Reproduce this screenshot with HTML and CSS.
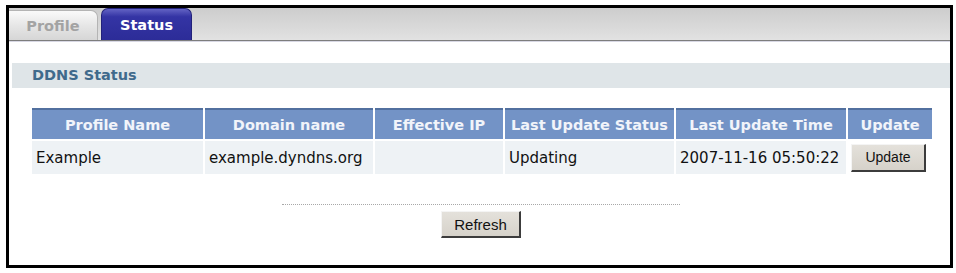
FILE: index.html
```
<!DOCTYPE html>
<html>
<head>
	<meta charset="UTF-8">
	<title>DDNS Status</title>
	<link rel="stylesheet" href="styles.css">
</head>
<body>
	<div class="frame">
		<div class="tab-bar">
			<div class="tab tab-off">Profile</div>
			<div class="tab tab-on">Status</div>
		</div>

		<div class="section-title">DDNS Status</div>

		<table class="status-table">
			<colgroup>
				<col class="c-name">
				<col class="c-domain">
				<col class="c-ip">
				<col class="c-status">
				<col class="c-time">
				<col class="c-update">
			</colgroup>
			<tr>
				<th>Profile Name</th>
				<th>Domain name</th>
				<th>Effective IP</th>
				<th>Last Update Status</th>
				<th>Last Update Time</th>
				<th>Update</th>
			</tr>
			<tr>
				<td>Example</td>
				<td>example.dyndns.org</td>
				<td></td>
				<td>Updating</td>
				<td>2007-11-16 05:50:22</td>
				<td class="btn-cell"><button class="btn btn-update">Update</button></td>
			</tr>
		</table>

		<div class="footer">
			<button class="btn btn-refresh">Refresh</button>
		</div>
	</div>
</body>
</html>
```

FILE: styles.css
```
body {
	margin: 0;
	padding: 0;
	background: #fff;
	font-family: "DejaVu Sans", Verdana, sans-serif;
}

.frame {
	margin: 5px 0 0 6px;
	width: 941px;
	height: 257px;
	border: 3px solid #000;
	background: #fff;
}

/* tabs */
.tab-bar {
	display: flex;
	align-items: flex-end;
	gap: 3px;
	height: 32px;
	background: linear-gradient(#cdcdcd, #d9d9d9 60%, #e2e2e2);
	border-bottom: 1px solid #7d7d7d;
	box-shadow: 0 1px 0 #d8d8e4;
}
.tab {
	display: flex;
	align-items: center;
	justify-content: center;
	font-size: 14.5px;
	font-weight: bold;
	box-sizing: border-box;
}
.tab-off {
	width: 89px;
	height: 30px;
	color: #a3a3a3;
	background: linear-gradient(#fafafa, #e6e6e6 50%, #d6d6d6);
	border: 1px solid #b4b4b4;
	border-bottom: none;
	border-left: none;
	border-radius: 0 7px 0 0;
	padding-top: 1px;
}
.tab-on {
	width: 91px;
	height: 32px;
	color: #fff;
	background: linear-gradient(#6363c4, #3434a4 25%, #2c2c98);
	border: 1px solid #22227a;
	border-bottom: none;
	border-radius: 7px 7px 0 0;
}

/* section */
.section-title {
	margin: 22px 0 0 3px;
	height: 25px;
	line-height: 25px;
	padding-left: 20px;
	background: #dfe5e8;
	color: #3f6a8c;
	font-size: 14.5px;
	font-weight: bold;
}

.status-table {
	margin: 18px 0 0 21px;
	border-spacing: 2px;
	table-layout: fixed;
	width: 904px;
}
.c-name { width: 171px; }
.c-domain { width: 168px; }
.c-ip { width: 128px; }
.c-status { width: 169px; }
.c-time { width: 170px; }
.c-update { width: 84px; }

.status-table th {
	height: 31px;
	box-sizing: border-box;
	padding: 0;
	background: #7393c6;
	border-top: 2px solid #52709f;
	color: #f1f4fa;
	font-size: 14.5px;
	font-weight: bold;
	text-align: center;
	white-space: nowrap;
}
.status-table td {
	height: 33px;
	padding: 0 0 0 4px;
	background: #eef2f5;
	color: #111;
	font-size: 15px;
	white-space: nowrap;
}
.status-table td.btn-cell {
	padding: 0 0 0 3px;
	background: #fff;
}

/* buttons */
.btn {
	font-family: "Liberation Sans", Arial, sans-serif;
	color: #111;
	background: linear-gradient(#e4e1db, #d6d2ca);
	border-top: 1px solid #f4f4f4;
	border-left: 1px solid #f4f4f4;
	border-right: 2px solid #3c3c3c;
	border-bottom: 2px solid #3c3c3c;
	padding: 0;
	cursor: pointer;
}
.btn-update {
	width: 75px;
	height: 28px;
	font-size: 14px;
}

.footer {
	margin: 28px 0 0 273px;
	width: 398px;
	border-top: 1px dotted #a8a8a8;
	padding-top: 6px;
	text-align: center;
}
.btn-refresh {
	width: 80px;
	height: 27px;
	font-size: 15px;
}
```
